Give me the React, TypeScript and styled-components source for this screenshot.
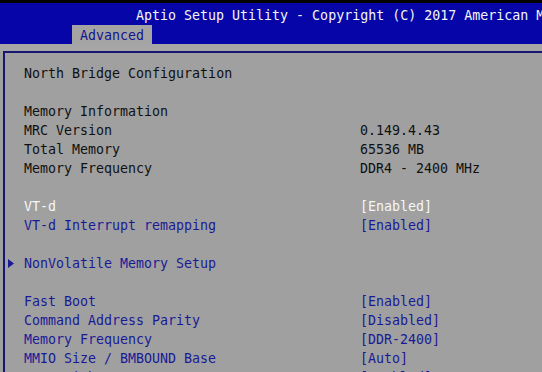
import React from "react";
import styled, { createGlobalStyle } from "styled-components";

const Global = createGlobalStyle`
  html, body { margin: 0; padding: 0; background: #a0a0a0; overflow: hidden; }
  body { font-family: "DejaVu Sans Mono", "Liberation Mono", monospace; }
`;

const Screen = styled.div`
  width: 542px;
  height: 372px;
  overflow: hidden;
  background: #a0a0a0;
  display: flex;
  flex-direction: column;
  font-family: "DejaVu Sans Mono", "Liberation Mono", monospace;
  font-size: 13.3px;
`;

const TopEdge = styled.div`
  height: 3px;
  background: #000;
  flex: none;
`;

const Header = styled.div`
  height: 41px;
  background: #0606a8;
  flex: none;
  display: flex;
  flex-direction: column;
  justify-content: space-between;
`;

const Title = styled.div`
  color: #f4f4f4;
  white-space: nowrap;
  padding-left: 136px;
  padding-top: 4px;
  line-height: 18px;
`;

const Tabs = styled.div`
  display: flex;
  padding-left: 72px;
`;

const Tab = styled.div`
  background: #a4a4a4;
  color: #14148c;
  padding: 0 8px;
  height: 19px;
  line-height: 21px;
`;

const Band = styled.div`
  height: 7px;
  background: #a6a6a6;
  flex: none;
`;

const Frame = styled.div`
  flex: 1;
  margin-left: 3px;
  border-top: 2px solid #161670;
  border-left: 2px solid #161670;
  padding: 11px 0 0 3px;
`;

const Row = styled.div`
  display: grid;
  grid-template-columns: 16px 336px 1fr;
  height: 19px;
  line-height: 19px;
  white-space: nowrap;
`;

const Marker = styled.div`
  display: flex;
  align-items: center;
`;

const Label = styled.div<{ $tone: string }>`
  color: ${(p) => p.$tone};
`;

const Value = styled.div<{ $tone: string }>`
  color: ${(p) => p.$tone};
`;

const BLACK = "#101010";
const WHITE = "#f6f6f6";
const BLUE = "#1a1a96";

type R = { label?: string; value?: string; lt?: string; vt?: string; arrow?: boolean };

const rows: R[] = [
  { label: "North Bridge Configuration", lt: BLACK },
  {},
  { label: "Memory Information", lt: BLACK },
  { label: "MRC Version", value: "0.149.4.43", lt: BLACK, vt: BLACK },
  { label: "Total Memory", value: "65536 MB", lt: BLACK, vt: BLACK },
  { label: "Memory Frequency", value: "DDR4 - 2400 MHz", lt: BLACK, vt: BLACK },
  {},
  { label: "VT-d", value: "[Enabled]", lt: WHITE, vt: WHITE },
  { label: "VT-d Interrupt remapping", value: "[Enabled]", lt: BLUE, vt: BLUE },
  {},
  { label: "NonVolatile Memory Setup", lt: BLUE, arrow: true },
  {},
  { label: "Fast Boot", value: "[Enabled]", lt: BLUE, vt: BLUE },
  { label: "Command Address Parity", value: "[Disabled]", lt: BLUE, vt: BLUE },
  { label: "Memory Frequency", value: "[DDR-2400]", lt: BLUE, vt: BLUE },
  { label: "MMIO Size / BMBOUND Base", value: "[Auto]", lt: BLUE, vt: BLUE },
  { label: "MMIO High Base", value: "[Enabled]", lt: BLUE, vt: BLUE },
];

export default function App() {
  return (
    <>
      <Global />
      <Screen>
        <TopEdge />
        <Header>
          <Title>Aptio Setup Utility - Copyright (C) 2017 American Megatrends, Inc.</Title>
          <Tabs>
            <Tab>Advanced</Tab>
          </Tabs>
        </Header>
        <Band />
        <Frame>
          {rows.map((r, i) => (
            <Row key={i}>
              <Marker>
                {r.arrow && (
                  <svg width="6" height="9" viewBox="0 0 6 9">
                    <polygon points="0,0 6,4.5 0,9" fill={BLUE} />
                  </svg>
                )}
              </Marker>
              <Label $tone={r.lt || BLACK}>{r.label || ""}</Label>
              <Value $tone={r.vt || BLACK}>{r.value || ""}</Value>
            </Row>
          ))}
        </Frame>
      </Screen>
    </>
  );
}
